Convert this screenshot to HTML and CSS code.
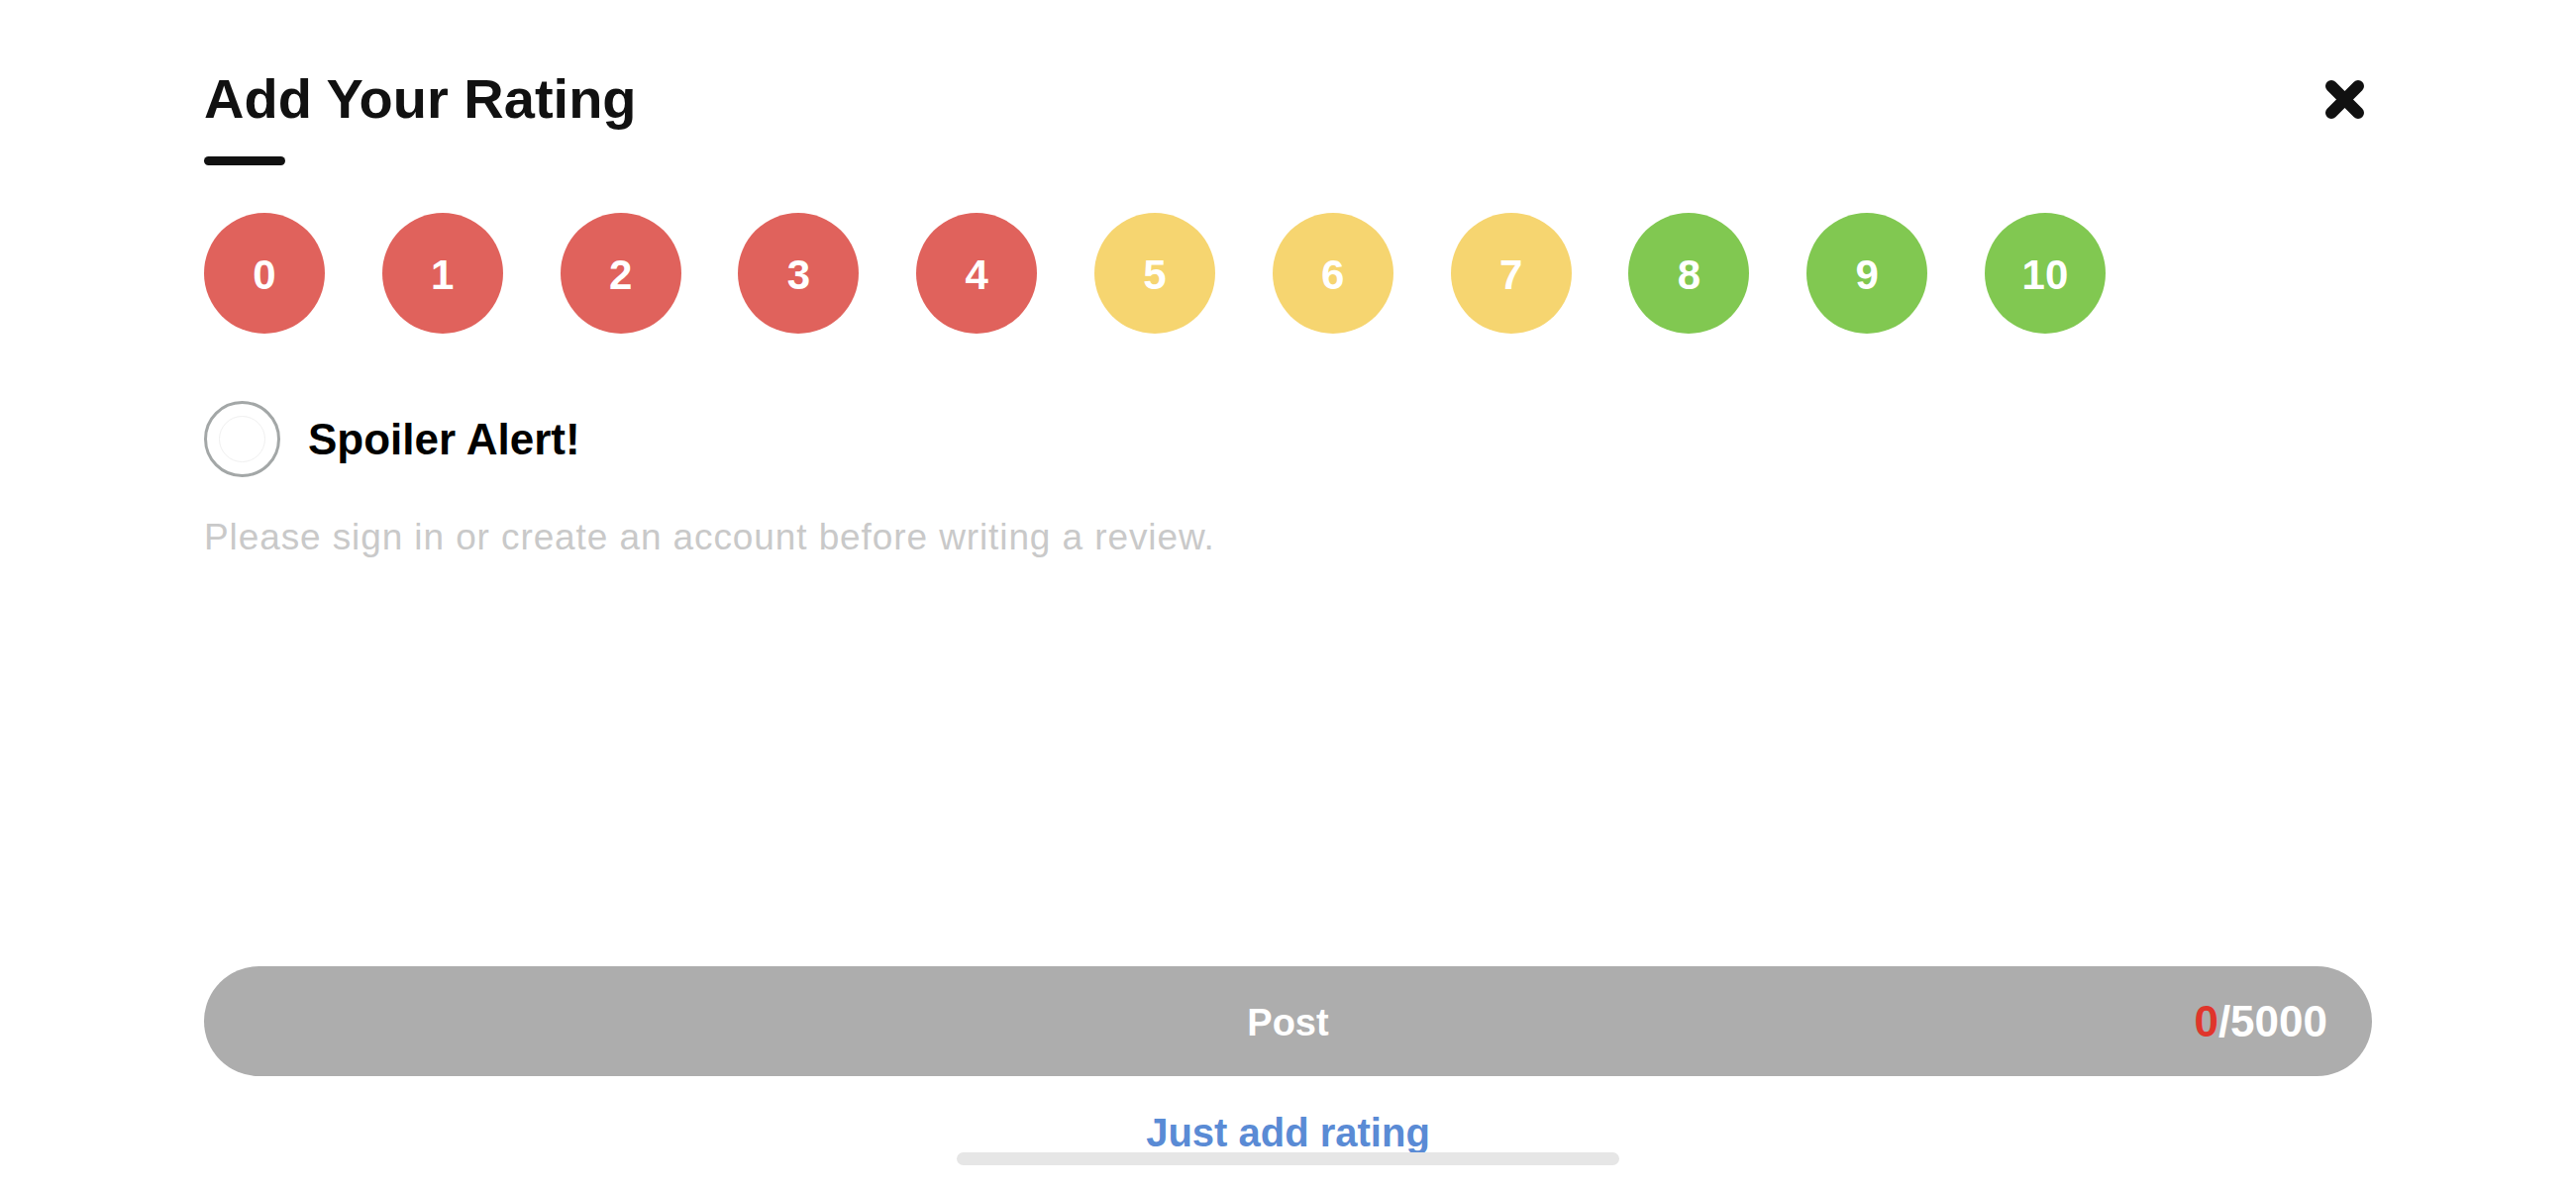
FILE: index.html
```html
<!DOCTYPE html>
<html lang="en">
<head>
    <meta charset="UTF-8">
    <meta name="viewport" content="width=device-width, initial-scale=1.0">
    <title>Add Your Rating</title>
    <link rel="stylesheet" href="styles.css">
</head>
<body>
    <div class="sheet">
        <div class="sheet-header">
            <div>
                <h1 class="sheet-title">Add Your Rating</h1>
                <div class="title-bar"></div>
            </div>
            <button class="close-button" aria-label="Close">
                <svg width="43" height="43" viewBox="0 0 43 43">
                    <path d="M8 8 L35 35 M35 8 L8 35" stroke="#111" stroke-width="12" stroke-linecap="round"/>
                </svg>
            </button>
        </div>

        <div class="rating-row">
            <button class="score bad">0</button>
            <button class="score bad">1</button>
            <button class="score bad">2</button>
            <button class="score bad">3</button>
            <button class="score bad">4</button>
            <button class="score ok">5</button>
            <button class="score ok">6</button>
            <button class="score ok">7</button>
            <button class="score good">8</button>
            <button class="score good">9</button>
            <button class="score good">10</button>
        </div>

        <label class="spoiler">
            <span class="spoiler-check"><span class="spoiler-inner"></span></span>
            <span class="spoiler-label">Spoiler Alert!</span>
        </label>

        <textarea class="review-box" placeholder="Please sign in or create an account before writing a review."></textarea>

        <div class="post-button">
            <span></span>
            <span class="post-label">Post</span>
            <span class="counter"><span class="counter-used">0</span>/5000</span>
        </div>

        <a class="just-rate" href="#">Just add rating</a>
    </div>
    <div class="home-indicator"></div>
</body>
</html>
```

FILE: styles.css
```css
body {
    margin: 0;
    height: 1200px;
    overflow: hidden;
    background: #fff;
    font-family: "Liberation Sans", Arial, sans-serif;
    color: #111;
}

.sheet {
    padding: 72px 206px 0 206px;
    display: flex;
    flex-direction: column;
}

.sheet-header {
    display: flex;
    justify-content: space-between;
    align-items: flex-start;
}

.sheet-title {
    margin: 0;
    font-size: 56px;
    line-height: 1;
    font-weight: bold;
    color: #111;
}

.title-bar {
    margin-top: 30px;
    width: 82px;
    height: 9px;
    border-radius: 5px;
    background: #111;
}

.close-button {
    margin: 7px 6px 0 0;
    padding: 0;
    border: none;
    background: none;
    width: 43px;
    height: 43px;
    cursor: pointer;
}

.close-button svg {
    display: block;
}

.rating-row {
    margin-top: 48px;
    display: flex;
    gap: 57.8px;
}

.score {
    width: 122px;
    height: 122px;
    border-radius: 50%;
    border: none;
    padding: 3px 0 0 0;
    font-family: "Liberation Sans", Arial, sans-serif;
    font-size: 42px;
    font-weight: bold;
    color: #fff;
    cursor: pointer;
}

.score.bad {
    background: #e0625c;
}

.score.ok {
    background: #f6d570;
}

.score.good {
    background: #81c851;
}

.spoiler {
    margin-top: 68px;
    display: flex;
    align-items: center;
    gap: 28px;
}

.spoiler-check {
    width: 77px;
    height: 77px;
    box-sizing: border-box;
    border: 3px solid #a3a7a7;
    border-radius: 50%;
    display: flex;
    justify-content: center;
    align-items: center;
}

.spoiler-inner {
    width: 45px;
    height: 45px;
    border-radius: 50%;
    border: 1px solid #f0f0f0;
}

.spoiler-label {
    font-size: 44px;
    font-weight: bold;
    color: #000;
}

.review-box {
    display: block;
    margin-top: 42px;
    padding: 0;
    width: 100%;
    height: 452px;
    border: none;
    outline: none;
    resize: none;
    font-family: "Liberation Sans", Arial, sans-serif;
    font-size: 37px;
    letter-spacing: 0.9px;
    line-height: 1;
    color: #333;
}

.review-box::placeholder {
    color: #c9c9c9;
}

.post-button {
    height: 111px;
    border-radius: 56px;
    background: #adadad;
    display: grid;
    grid-template-columns: 1fr auto 1fr;
    align-items: center;
    padding: 0 45px;
    color: #fff;
    font-weight: bold;
}

.post-label {
    font-size: 38px;
    padding-top: 3px;
}

.counter {
    justify-self: end;
    font-size: 44px;
}

.counter-used {
    color: #e0352b;
}

.just-rate {
    align-self: center;
    margin-top: 37px;
    font-size: 40px;
    line-height: 1;
    font-weight: bold;
    color: #5a8bd5;
    text-decoration: none;
}

.home-indicator {
    position: absolute;
    left: 966px;
    bottom: 23px;
    width: 669px;
    height: 13px;
    border-radius: 7px;
    background: #e6e6e6;
}
```
